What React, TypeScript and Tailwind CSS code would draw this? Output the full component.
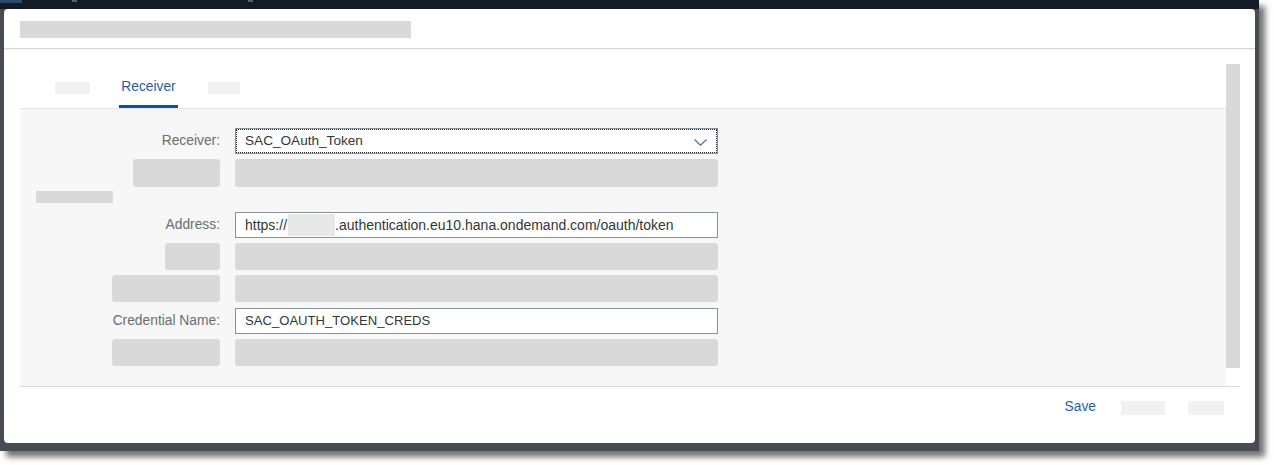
import React from "react";

const font = { fontFamily: '"Liberation Sans", Arial, sans-serif' };

function LabelBox({ w, h }: { w: number; h: number }) {
  return (
    <div className="flex w-[200px] shrink-0 justify-end">
      <div
        className="rounded-[3px] bg-[#d9d9d9]"
        style={{ width: w, height: h }}
      />
    </div>
  );
}

function PlaceholderRow({ lw, h, mt }: { lw: number; h: number; mt: number }) {
  return (
    <div className="flex gap-[15px]" style={{ marginTop: mt }}>
      <LabelBox w={lw} h={h} />
      <div className="w-[483px] rounded-[3px] bg-[#d9d9d9]" style={{ height: h }} />
    </div>
  );
}

function Label({ children }: { children: React.ReactNode }) {
  return (
    <div className="flex w-[200px] shrink-0 items-center justify-end text-[13.8px] text-[#6a6d70]">
      {children}
    </div>
  );
}

export default function App() {
  return (
    <div className="min-h-screen bg-white" style={font}>
      <div className="flex h-[451px] w-[1259px] flex-col shadow-[6px_6px_6px_rgba(0,0,0,0.55)]">
        {/* top app bar strip */}
        <div className="relative h-[9px] shrink-0 bg-[#131b25]">
          <div className="absolute left-0 top-0 h-[3px] w-[22px] bg-[#2a4a70]" />
          <div className="absolute left-[72px] top-0 h-[2px] w-[5px] bg-[#5a6068]" />
          <div className="absolute left-[248px] top-0 h-[2px] w-[5px] bg-[#5a6068]" />
        </div>
        <div className="flex flex-1 flex-col bg-[#474c52] px-[4px] pb-[8px]">
          {/* dialog */}
          <div className="flex flex-1 flex-col rounded-[4px] bg-white">
            {/* header */}
            <div className="h-[40px] shrink-0 border-b border-[#d5d5d5] pl-[16px] pt-[12px] shadow-[0_1px_2px_rgba(0,0,0,0.06)]">
              <div className="h-[17px] w-[391px] bg-[#d9d9d9]" />
            </div>
            {/* body */}
            <div className="pl-[16px] pr-[15px] pt-[15px]">
              <div className="flex h-[323px] border-b border-[#d9d9d9]">
                <div className="flex flex-1 flex-col">
                  {/* tabs */}
                  <div className="flex h-[45px] shrink-0 border-b border-[#e5e5e5] pl-[35px]">
                    <div className="flex items-center pt-[4px]">
                      <div className="h-[12px] w-[35px] bg-[#f2f2f2]" />
                    </div>
                    <div className="ml-[29px] flex w-[59px] items-center justify-center border-b-[3px] border-[#0854a0] pt-[5px] text-[13.8px] text-[#1f5fa8]">
                      Receiver
                    </div>
                    <div className="ml-[30px] flex items-center pt-[4px]">
                      <div className="h-[12px] w-[32px] bg-[#f2f2f2]" />
                    </div>
                  </div>
                  {/* form */}
                  <div className="flex-1 bg-[#f7f7f7] pt-[19px]">
                    <div className="flex gap-[15px]">
                      <Label>Receiver:</Label>
                      <div className="relative flex h-[26px] w-[483px] items-center border border-[#89919a] bg-white pl-[9px] text-[13.6px] text-[#32363a] outline-1 -outline-offset-2 outline-dotted outline-[#222]">
                        SAC_OAuth_Token
                        <svg
                          className="absolute right-[10px] top-[10px]"
                          width="13"
                          height="7"
                          viewBox="0 0 13 7"
                        >
                          <polyline
                            points="0.5,0.5 6.5,6.3 12.5,0.5"
                            fill="none"
                            stroke="#3a77c0"
                            strokeWidth="1.2"
                          />
                        </svg>
                      </div>
                    </div>
                    <PlaceholderRow lw={87} h={28} mt={5} />
                    <div className="ml-[16px] mt-[4px] h-[12px] w-[77px] bg-[#d9d9d9]" />
                    <div className="mt-[9px] flex gap-[15px]">
                      <Label>Address:</Label>
                      <div className="flex h-[26px] w-[483px] items-center border border-[#89919a] bg-white pl-[9px] text-[14px] text-[#32363a]">
                        <span>https://</span>
                        <span className="ml-[1px] inline-block h-[22px] w-[47px] bg-[#e8e8e8]" />
                        <span>.authentication.eu10.hana.ondemand.com/oauth/token</span>
                      </div>
                    </div>
                    <PlaceholderRow lw={55} h={27} mt={5} />
                    <PlaceholderRow lw={108} h={27} mt={5} />
                    <div className="mt-[6px] flex gap-[15px]">
                      <Label>Credential Name:</Label>
                      <div className="flex h-[26px] w-[483px] items-center border border-[#89919a] bg-white pl-[9px] text-[13.1px] text-[#32363a]">
                        SAC_OAUTH_TOKEN_CREDS
                      </div>
                    </div>
                    <PlaceholderRow lw={108} h={27} mt={5} />
                  </div>
                </div>
                {/* scrollbar */}
                <div className="w-[14px] shrink-0">
                  <div className="h-[304px] w-[14px] bg-[#d9d9d9]" />
                </div>
              </div>
            </div>
            {/* footer */}
            <div className="flex flex-1 items-start justify-end pr-[31px] pt-[13px]">
              <span className="text-[13.8px] leading-[14px] text-[#1f5fa8]">Save</span>
              <div className="ml-[25px] mt-[1px] h-[14px] w-[44px] bg-[#f2f2f2]" />
              <div className="ml-[23px] mt-[1px] h-[14px] w-[36px] bg-[#f2f2f2]" />
            </div>
          </div>
        </div>
      </div>
    </div>
  );
}
